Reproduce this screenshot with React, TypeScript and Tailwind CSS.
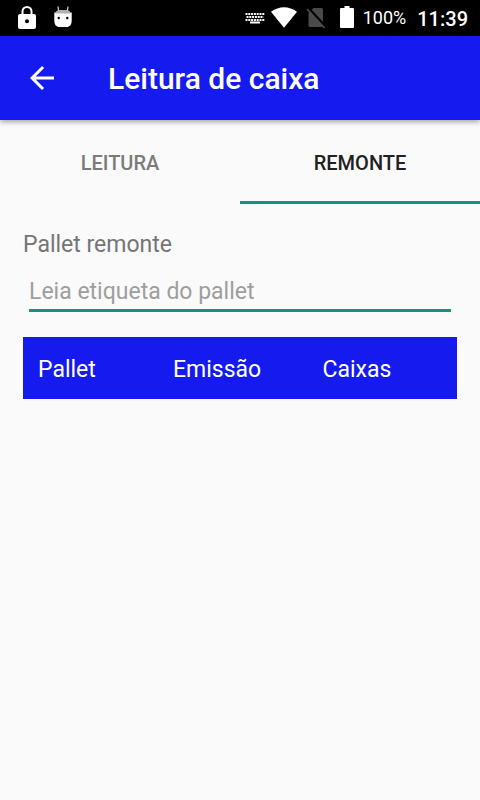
import { useState } from "react";

const TABS = ["Leitura", "Remonte"];

function LockIcon() {
  return (
    <svg className="h-6 w-5" viewBox="0 0 20 24" aria-hidden="true">
      <path d="M5.500 9V5.500a4.500 4.500 0 0 1 9 0V9" fill="none" stroke="#fff" strokeWidth="2" />
      <path
        fillRule="evenodd"
        fill="#fff"
        d="M3 8h14a2 2 0 0 1 2 2V21a2 2 0 0 1-2 2H3a2 2 0 0 1-2-2V10a2 2 0 0 1 2-2zM10 13.200a2 2 0 1 0 0 4 2 2 0 0 0 0-4z"
      />
    </svg>
  );
}

function RobotIcon() {
  return (
    <svg className="h-6 w-5" viewBox="0 0 20 24" aria-hidden="true">
      <path d="M5 0.500l0.600 4.500M15 0.500l-0.600 4.500" stroke="#ddd" strokeWidth="1.200" fill="none" />
      <path d="M1.300 6.500h17.400V14c0 5-2 7-5.200 7h-7c-3.200 0-5.200-2-5.200-7z" fill="#fff" />
      <path d="M2.500 7C3 4.700 4.500 4 6.500 4h7c2 0 3.500 0.700 4 3v0.500h-15z" fill="#b0b0b0" />
      <circle cx="5.700" cy="12" r="1.200" fill="#000" />
      <circle cx="14.300" cy="12" r="1.200" fill="#000" />
    </svg>
  );
}

function KeyboardIcon() {
  return (
    <svg className="h-3 w-5" viewBox="0 0 20 12" aria-hidden="true">
      <g stroke="#fff" strokeWidth="2" fill="none">
        <path d="M0.500 2h19" strokeDasharray="2 0.800" />
        <path d="M1.500 5h17" strokeDasharray="2 0.800" />
        <path d="M0.500 8h19" strokeDasharray="2 0.800" />
        <path d="M5 10.500h10" />
      </g>
    </svg>
  );
}

function WifiIcon() {
  return (
    <svg className="h-6 w-7" viewBox="0 0 28 24" aria-hidden="true">
      <path d="M1 5.700C9-.4 19-.4 27 5.700L14 21.700z" fill="#fff" />
    </svg>
  );
}

function NoSimIcon() {
  return (
    <svg className="h-6 w-5" viewBox="0 0 20 24" aria-hidden="true">
      <path d="M7.500 2H15.500a1.500 1.500 0 0 1 1.500 1.500v16A1.500 1.500 0 0 1 15.500 21H4a1.500 1.500 0 0 1-1.500-1.500V7z" fill="#4a4a4a" />
      <path d="M2 1.500L20 21" stroke="#000" strokeWidth="2.500" />
      <path d="M1 3L18.500 22" stroke="#4a4a4a" strokeWidth="1.800" />
    </svg>
  );
}

function BatteryIcon() {
  return (
    <svg className="h-6 w-4" viewBox="0 0 16 24" aria-hidden="true">
      <path d="M5.500 0h5v2H14a1 1 0 0 1 1 1v18a1 1 0 0 1-1 1H2a1 1 0 0 1-1-1V3a1 1 0 0 1 1-1h3.500z" fill="#fff" />
    </svg>
  );
}

function StatusBar() {
  return (
    <div className="flex h-9 items-center bg-black pl-[17px] pr-3 text-white">
      <div className="flex items-center gap-4">
        <LockIcon />
        <RobotIcon />
      </div>
      <div className="ml-auto flex items-center">
        <KeyboardIcon />
        <div className="ml-[5px] flex items-center gap-2">
          <WifiIcon />
          <NoSimIcon />
          <div className="ml-[5px] flex items-center gap-2">
            <BatteryIcon />
            <span className="text-lg leading-6">100%</span>
          </div>
        </div>
        <span className="ml-[11px] pt-px text-xl font-medium leading-6">11:39</span>
      </div>
    </div>
  );
}

export default function App() {
  const [active, setActive] = useState(1);

  return (
    <div className="min-h-screen bg-[#fafafa] font-['Roboto',sans-serif]">
      <StatusBar />
      <header className="flex h-[84px] items-center gap-[45px] bg-[#151bee] pl-[21px] text-white shadow-[0_2px_5px_rgba(0,0,0,0.35)]">
        <button type="button" aria-label="Voltar" className="flex size-[42px] items-center justify-center">
          <svg className="size-9" viewBox="0 0 24 24" fill="#fff" aria-hidden="true">
            <path d="M20 11H7.830l5.590-5.590L12 4l-8 8 8 8 1.410-1.410L7.830 13H20v-2z" />
          </svg>
        </button>
        <h1 className="pt-[2px] text-[30px] font-medium leading-9">Leitura de caixa</h1>
      </header>

      <div role="tablist" className="grid grid-cols-2">
        {TABS.map((tab, i) => (
          <button
            key={tab}
            type="button"
            role="tab"
            aria-selected={i === active}
            onClick={() => setActive(i)}
            className={
              "h-[84px] border-b-[3px] pt-1 text-xl font-medium uppercase " +
              (i === active ? "border-[#129482] text-[#212121]" : "border-transparent text-[#7b7b7b]")
            }
          >
            {tab}
          </button>
        ))}
      </div>

      <main className="px-[23px] pt-[25px] text-[23px]">
        <label htmlFor="pallet" className="block leading-8 text-[#757575]">
          Pallet remonte
        </label>
        <div className="px-[6px] pt-[11px]">
          <input
            id="pallet"
            type="text"
            placeholder="Leia etiqueta do pallet"
            className="block h-10 w-full border-b-[3px] border-[#129482] bg-transparent pt-[2px] text-[#212121] outline-none placeholder:text-[#9e9e9e]"
          />
        </div>
        <table className="mt-[25px] w-full table-fixed bg-[#151bee] text-left text-white">
          <thead>
            <tr className="h-[62px]">
              <th scope="col" className="w-[135px] pl-[15px] pt-1 font-normal">Pallet</th>
              <th scope="col" className="pl-[15px] pt-1 font-normal">Emissão</th>
              <th scope="col" className="pl-[15px] pt-1 font-normal">Caixas</th>
            </tr>
          </thead>
        </table>
      </main>
    </div>
  );
}
